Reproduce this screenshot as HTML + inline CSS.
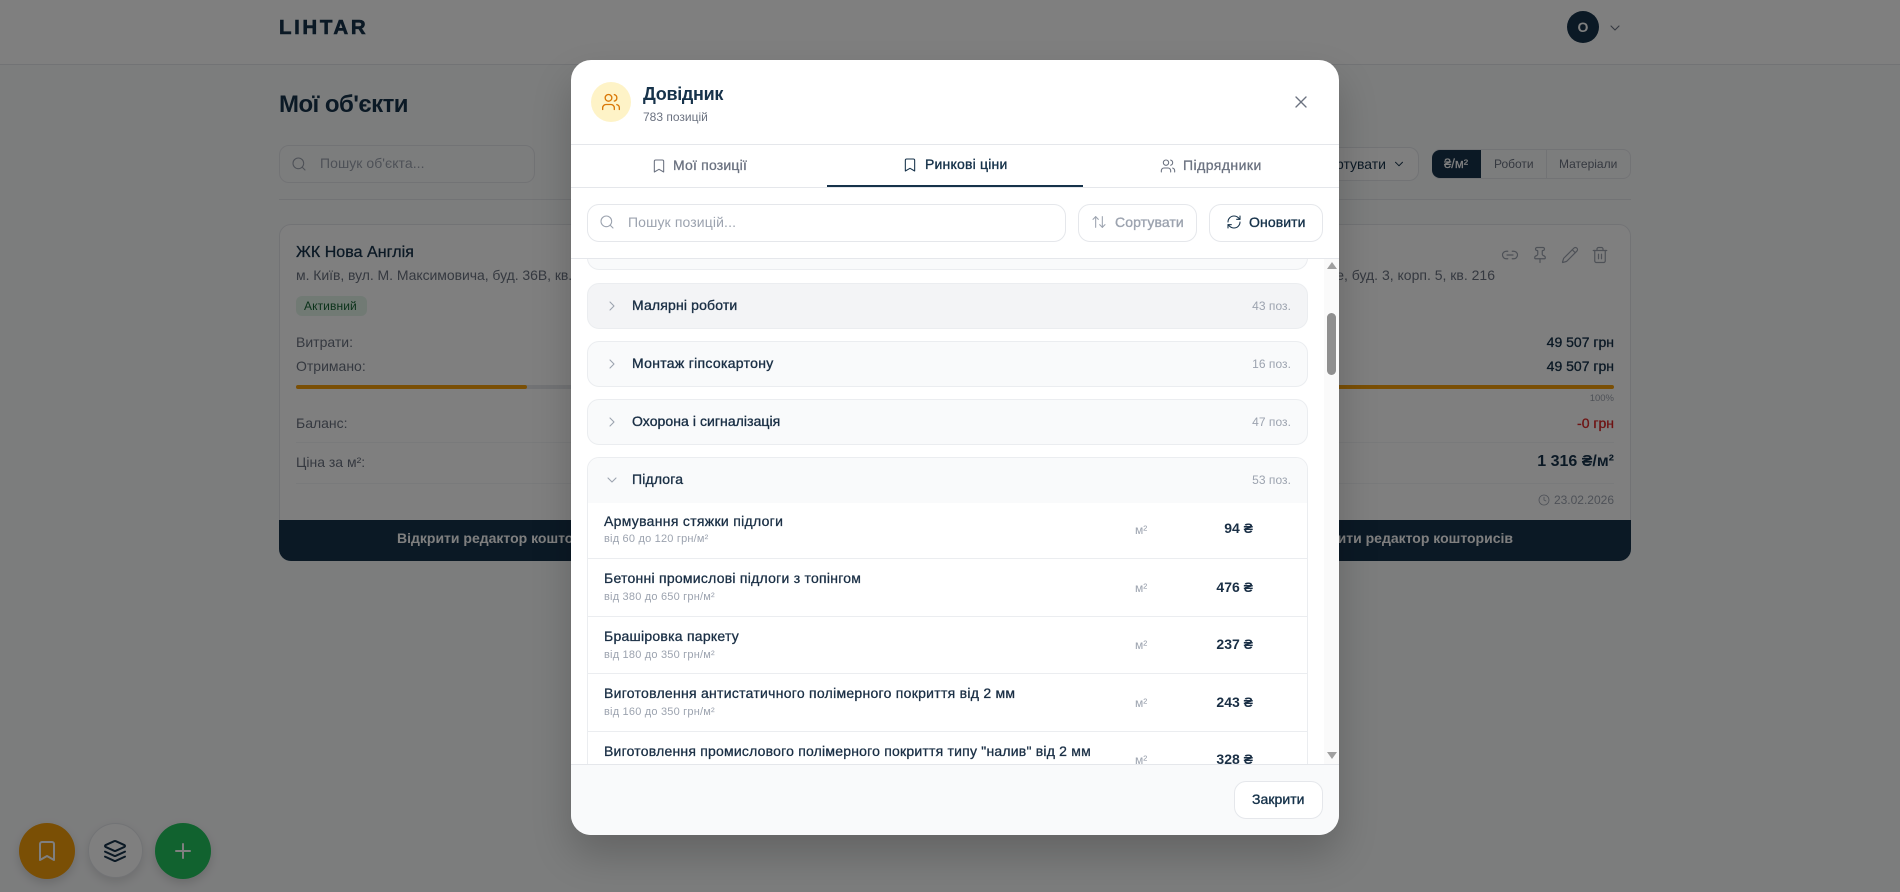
<!DOCTYPE html>
<html lang="uk"><head><meta charset="utf-8"><title>Довідник</title>
<style>
*{box-sizing:border-box}
html,body{margin:0;padding:0}
body{width:1900px;height:892px;overflow:hidden;position:relative;background:#f9fafb;font-family:"Liberation Sans","Noto Sans CJK JP",sans-serif;color:#16324a}
.a{position:absolute}
.t{position:absolute;white-space:nowrap;line-height:20px;font-size:14px}
svg{position:absolute;fill:none;stroke:currentColor;stroke-width:1.6;stroke-linecap:round;stroke-linejoin:round}
.cat{position:absolute;left:587px;width:721px;height:46px;border:1px solid #ebedf0;border-radius:12px;background:#f9fafb}
.name{position:absolute;left:632px;white-space:nowrap;line-height:20px;font-size:14px;color:#1a2f45;-webkit-text-stroke:.35px currentColor;letter-spacing:.16px}
.cnt{position:absolute;right:609px;white-space:nowrap;line-height:20px;font-size:12px;color:#9ca3af;letter-spacing:.05px}
.ti{position:absolute;left:604px;white-space:nowrap;line-height:20px;font-size:14px;color:#1a2f45;-webkit-text-stroke:.3px currentColor;letter-spacing:.25px}
.su{position:absolute;left:604px;white-space:nowrap;line-height:16px;font-size:11px;color:#9ca3af;letter-spacing:.2px}
.un{position:absolute;left:1135px;white-space:nowrap;line-height:20px;font-size:12px;color:#9ca3af}
.pr{position:absolute;right:647px;white-space:nowrap;line-height:20px;font-size:14px;font-weight:700;color:#1a2f45}
.ln{position:absolute;left:588px;width:719px;height:1px;background:#ebedf0}
</style></head><body>

<!-- page -->
<div class="a" style="left:0;top:0;width:1900px;height:65px;background:#fff;border-bottom:1px solid #e5e7eb"></div>
<div class="t" style="left:279px;top:18px;font-size:20.5px;font-weight:700;letter-spacing:2.6px;line-height:20px;color:#16324a;-webkit-text-stroke:.6px currentColor">LIHTAR</div>
<div class="a" style="left:1567px;top:11px;width:32px;height:32px;border-radius:50%;background:#16324a;color:#fff;font-size:14px;font-weight:700;text-align:center;line-height:32px">О</div>
<svg style="left:1607px;top:20px;color:#6b7280" width="16" height="16" viewBox="0 0 24 24"><path d="m6 9 6 6 6-6"/></svg>

<div class="t" style="left:279px;top:90px;line-height:30px;font-size:24px;font-weight:700;letter-spacing:-.55px;color:#16324a">Мої об'єкти</div>

<div class="a" style="left:279px;top:145px;width:256px;height:38px;border:1px solid #e5e7eb;border-radius:10px;background:#f9fafb"></div>
<svg style="left:291px;top:156px;color:#9ca3af" width="16" height="16" viewBox="0 0 24 24"><circle cx="11" cy="11" r="8"/><path d="m21 21-4.3-4.3"/></svg>
<div class="t" style="left:320px;top:153px;color:#9ca3af;letter-spacing:.05px">Пошук об'єкта...</div>

<div class="a" style="left:1300px;top:147px;width:119px;height:34px;border:1px solid #e5e7eb;border-radius:10px;background:#fff"></div>
<div class="t" style="right:514px;top:154px;color:#16324a">Сортувати</div>
<svg style="left:1392px;top:157px;color:#16324a" width="14" height="14" viewBox="0 0 24 24"><path d="m6 9 6 6 6-6"/></svg>
<div class="a" style="left:1432px;top:149px;width:199px;height:30px;border:1px solid #e5e7eb;border-radius:8px;background:#f9fafb"></div>
<div class="a" style="left:1432px;top:150px;width:49px;height:28px;background:#16324a;border-radius:8px 0 0 8px"></div>
<div class="t" style="left:1444px;top:154px;font-size:13px;color:#fff;-webkit-text-stroke:.2px currentColor">₴/м²</div>
<div class="t" style="left:1494px;top:154px;font-size:12px;color:#6b7280">Роботи</div>
<div class="a" style="left:1546px;top:150px;width:1px;height:28px;background:#e5e7eb"></div>
<div class="t" style="left:1559px;top:154px;font-size:12px;color:#6b7280">Матеріали</div>
<div class="a" style="left:279px;top:199px;width:1352px;height:1px;background:#e5e7eb"></div>

<div class="a" style="left:279px;top:224px;width:1352px;height:337px;background:#fff;border:1px solid #e5e7eb;border-radius:12px"></div>
<div class="a" style="left:279px;top:520px;width:1352px;height:41px;background:#16324a;border-radius:0 0 12px 12px"></div>
<div class="t" style="left:296px;top:243px;font-size:16px;color:#16324a;letter-spacing:.05px;-webkit-text-stroke:.3px currentColor">ЖК Нова Англія</div>
<div class="t" style="left:296px;top:265px;font-size:14px;letter-spacing:-.05px;color:#6b7280">м. Київ, вул. М. Максимовича, буд. 36В, кв. 12</div>
<div class="a" style="left:296px;top:296px;width:71px;height:20px;background:#e3f5e9;border-radius:6px"></div>
<div class="t" style="left:304px;top:296px;font-size:12px;letter-spacing:.1px;color:#166534">Активний</div>
<div class="t" style="left:296px;top:332px;color:#6b7280">Витрати:</div>
<div class="t" style="left:296px;top:356px;color:#6b7280">Отримано:</div>
<div class="a" style="left:296px;top:385px;width:300px;height:4px;background:#e5e7eb;border-radius:2px"></div>
<div class="a" style="left:296px;top:385px;width:231px;height:4px;background:#f59e0b;border-radius:2px"></div>
<div class="t" style="left:296px;top:413px;color:#6b7280">Баланс:</div>
<div class="a" style="left:296px;top:442px;width:300px;height:1px;background:#f3f4f6"></div>
<div class="t" style="left:296px;top:452px;color:#6b7280">Ціна за м²:</div>
<div class="a" style="left:296px;top:483px;width:300px;height:1px;background:#f3f4f6"></div>
<div class="t" style="left:397px;top:528px;font-weight:700;color:#fff">Відкрити редактор кошторисів</div>

<svg style="left:1501px;top:246px;color:#9ca3af" width="18" height="18" viewBox="0 0 24 24"><path d="M9 17H7A5 5 0 0 1 7 7h2"/><path d="M15 7h2a5 5 0 1 1 0 10h-2"/><path d="M8 12h8"/></svg>
<svg style="left:1531px;top:246px;color:#9ca3af" width="18" height="18" viewBox="0 0 24 24"><path d="M12 17v5"/><path d="M9 10.76a2 2 0 0 1-1.11 1.79l-1.78.9A2 2 0 0 0 5 15.24V16a1 1 0 0 0 1 1h12a1 1 0 0 0 1-1v-.76a2 2 0 0 0-1.11-1.79l-1.78-.9A2 2 0 0 1 15 10.76V7a1 1 0 0 1 1-1 2 2 0 0 0 0-4H8a2 2 0 0 0 0 4 1 1 0 0 1 1 1z"/></svg>
<svg style="left:1561px;top:246px;color:#9ca3af" width="18" height="18" viewBox="0 0 24 24"><path d="M21.174 6.812a1 1 0 0 0-3.986-3.987L3.842 16.174a2 2 0 0 0-.5.83l-1.321 4.352a.5.5 0 0 0 .623.622l4.353-1.32a2 2 0 0 0 .83-.497z"/><path d="m15 5 4 4"/></svg>
<svg style="left:1591px;top:246px;color:#9ca3af" width="18" height="18" viewBox="0 0 24 24"><path d="M3 6h18"/><path d="M19 6v14c0 1-1 2-2 2H7c-1 0-2-1-2-2V6"/><path d="M8 6V4c0-1 1-2 2-2h4c1 0 2 1 2 2v2"/><path d="M10 11v6"/><path d="M14 11v6"/></svg>
<div class="t" style="right:405px;top:265px;color:#6b7280">м. Київ, вул. Набережне шосе, буд. 3, корп. 5, кв. 216</div>
<div class="t" style="right:286px;top:332px;color:#16324a;-webkit-text-stroke:.3px currentColor">49 507 грн</div>
<div class="t" style="right:286px;top:356px;color:#16324a;-webkit-text-stroke:.3px currentColor">49 507 грн</div>
<div class="a" style="left:1320px;top:385px;width:294px;height:4px;background:#f59e0b;border-radius:2px"></div>
<div class="t" style="right:286px;top:389px;font-size:9.5px;color:#9ca3af">100%</div>
<div class="t" style="right:286px;top:413px;color:#dc2626;-webkit-text-stroke:.3px currentColor">-0 грн</div>
<div class="a" style="left:1320px;top:442px;width:294px;height:1px;background:#f3f4f6"></div>
<div class="t" style="right:286px;top:452px;font-size:16px;font-weight:700;color:#16324a">1 316 ₴/м²</div>
<div class="a" style="left:1320px;top:483px;width:294px;height:1px;background:#f3f4f6"></div>
<svg style="left:1538px;top:494px;color:#9ca3af" width="12" height="12" viewBox="0 0 24 24"><circle cx="12" cy="12" r="10"/><path d="M12 6v6l4 2"/></svg>
<div class="t" style="right:286px;top:490px;font-size:12px;color:#9ca3af">23.02.2026</div>
<div class="t" style="right:387px;top:528px;font-weight:700;color:#fff">Відкрити редактор кошторисів</div>

<!-- FABs -->
<div class="a" style="left:19px;top:823px;width:56px;height:56px;border-radius:50%;background:#f59e0b;box-shadow:0 4px 10px rgba(0,0,0,.15)"></div>
<svg style="left:35px;top:839px;color:#fff;stroke-width:2" width="24" height="24" viewBox="0 0 24 24"><path d="m19 21-7-4-7 4V5a2 2 0 0 1 2-2h10a2 2 0 0 1 2 2v16z"/></svg>
<div class="a" style="left:88px;top:823px;width:55px;height:55px;border-radius:50%;background:#fff;border:1px solid #e5e7eb;box-shadow:0 4px 10px rgba(0,0,0,.12)"></div>
<svg style="left:103px;top:839px;color:#16324a;stroke-width:2" width="24" height="24" viewBox="0 0 24 24"><path d="m12.83 2.18a2 2 0 0 0-1.66 0L2.6 6.08a1 1 0 0 0 0 1.83l8.58 3.91a2 2 0 0 0 1.66 0l8.58-3.9a1 1 0 0 0 0-1.83Z"/><path d="m22 17.65-9.17 4.16a2 2 0 0 1-1.66 0L2 17.65"/><path d="m22 12.65-9.17 4.16a2 2 0 0 1-1.66 0L2 12.65"/></svg>
<div class="a" style="left:155px;top:823px;width:56px;height:56px;border-radius:50%;background:#22c55e;box-shadow:0 4px 10px rgba(0,0,0,.15)"></div>
<svg style="left:171px;top:839px;color:#fff;stroke-width:2" width="24" height="24" viewBox="0 0 24 24"><path d="M5 12h14"/><path d="M12 5v14"/></svg>

<!-- overlay -->
<div class="a" style="left:0;top:0;width:1900px;height:892px;background:rgba(0,0,0,.5)"></div>

<!-- modal -->
<div class="a" style="left:571px;top:60px;width:768px;height:775px;background:#fff;border-radius:20px;box-shadow:0 20px 40px rgba(0,0,0,.2)"></div>
<div class="a" style="left:591px;top:82px;width:40px;height:40px;border-radius:50%;background:#fef3c7"></div>
<svg style="left:601px;top:92px;color:#d97706" width="20" height="20" viewBox="0 0 24 24"><path d="M16 21v-2a4 4 0 0 0-4-4H6a4 4 0 0 0-4 4v2"/><circle cx="9" cy="7" r="4"/><path d="M22 21v-2a4 4 0 0 0-3-3.87"/><path d="M16 3.13a4 4 0 0 1 0 7.75"/></svg>
<div class="t" style="left:643px;top:84px;font-size:18px;font-weight:700;letter-spacing:-.3px;color:#16324a">Довідник</div>
<div class="t" style="left:643px;top:107px;font-size:12px;color:#6b7280">783 позицій</div>
<svg style="left:1291px;top:92px;color:#6b7280" width="20" height="20" viewBox="0 0 24 24"><path d="M18 6 6 18"/><path d="m6 6 12 12"/></svg>
<div class="a" style="left:571px;top:144px;width:768px;height:1px;background:#e5e7eb"></div>
<div class="a" style="left:571px;top:187px;width:768px;height:1px;background:#e5e7eb"></div>
<div class="a" style="left:827px;top:185px;width:256px;height:2px;background:#16324a"></div>

<svg style="left:651px;top:158px;color:#6b7280" width="16" height="16" viewBox="0 0 24 24"><path d="m19 21-7-4-7 4V5a2 2 0 0 1 2-2h10a2 2 0 0 1 2 2v16z"/></svg>
<div class="t" style="left:673px;top:155px;color:#6b7280;letter-spacing:.2px;-webkit-text-stroke:.3px currentColor">Мої позиції</div>
<svg style="left:902px;top:157px;color:#16324a" width="16" height="16" viewBox="0 0 24 24"><path d="m19 21-7-4-7 4V5a2 2 0 0 1 2-2h10a2 2 0 0 1 2 2v16z"/></svg>
<div class="t" style="left:925px;top:154px;color:#16324a;letter-spacing:.2px;-webkit-text-stroke:.35px currentColor">Ринкові ціни</div>
<svg style="left:1160px;top:158px;color:#6b7280" width="16" height="16" viewBox="0 0 24 24"><path d="M16 21v-2a4 4 0 0 0-4-4H6a4 4 0 0 0-4 4v2"/><circle cx="9" cy="7" r="4"/><path d="M22 21v-2a4 4 0 0 0-3-3.87"/><path d="M16 3.13a4 4 0 0 1 0 7.75"/></svg>
<div class="t" style="left:1183px;top:155px;color:#6b7280;letter-spacing:.45px;-webkit-text-stroke:.3px currentColor">Підрядники</div>

<div class="a" style="left:587px;top:204px;width:479px;height:38px;border:1px solid #e5e7eb;border-radius:12px"></div>
<svg style="left:599px;top:214px;color:#9ca3af" width="16" height="16" viewBox="0 0 24 24"><circle cx="11" cy="11" r="8"/><path d="m21 21-4.3-4.3"/></svg>
<div class="t" style="left:628px;top:212px;color:#9ca3af;letter-spacing:.12px">Пошук позицій...</div>
<div class="a" style="left:1078px;top:204px;width:119px;height:38px;border:1px solid #e5e7eb;border-radius:12px"></div>
<svg style="left:1091px;top:214px;color:#9ca3af" width="16" height="16" viewBox="0 0 24 24"><path d="m21 16-4 4-4-4"/><path d="M17 20V4"/><path d="m3 8 4-4 4 4"/><path d="M7 4v16"/></svg>
<div class="t" style="left:1115px;top:212px;color:#9ca3af;letter-spacing:.1px;-webkit-text-stroke:.35px currentColor">Сортувати</div>
<div class="a" style="left:1209px;top:204px;width:114px;height:38px;border:1px solid #e5e7eb;border-radius:12px"></div>
<svg style="left:1226px;top:214px;color:#16324a" width="16" height="16" viewBox="0 0 24 24"><path d="M3 12a9 9 0 0 1 9-9 9.75 9.75 0 0 1 6.74 2.74L21 8"/><path d="M21 3v5h-5"/><path d="M21 12a9 9 0 0 1-9 9 9.75 9.75 0 0 1-6.74-2.74L3 16"/><path d="M8 16H3v5"/></svg>
<div class="t" style="left:1249px;top:212px;color:#16324a;letter-spacing:.1px;-webkit-text-stroke:.35px currentColor">Оновити</div>
<div class="a" style="left:571px;top:258px;width:768px;height:1px;background:#e5e7eb"></div>

<!-- list -->
<div class="a" style="left:0;top:259px;width:1900px;height:505px;overflow:hidden;clip-path:inset(0 561px 0 571px)">
 <div class="a" style="left:0;top:-259px;width:1900px;height:892px">
  <div class="cat" style="top:224px"></div>

  <div class="cat" style="top:283px;background:#f3f4f6"></div>
  <svg style="left:604px;top:298px;color:#9ca3af" width="16" height="16" viewBox="0 0 24 24"><path d="m9 18 6-6-6-6"/></svg>
  <div class="name" style="top:295px">Малярні роботи</div>
  <div class="cnt" style="top:296px">43 поз.</div>

  <div class="cat" style="top:341px"></div>
  <svg style="left:604px;top:356px;color:#9ca3af" width="16" height="16" viewBox="0 0 24 24"><path d="m9 18 6-6-6-6"/></svg>
  <div class="name" style="top:353px;letter-spacing:.3px">Монтаж гіпсокартону</div>
  <div class="cnt" style="top:354px">16 поз.</div>

  <div class="cat" style="top:399px"></div>
  <svg style="left:604px;top:414px;color:#9ca3af" width="16" height="16" viewBox="0 0 24 24"><path d="m9 18 6-6-6-6"/></svg>
  <div class="name" style="top:411px;letter-spacing:.06px">Охорона і сигналізація</div>
  <div class="cnt" style="top:412px">47 поз.</div>

  <div class="a" style="left:587px;top:457px;width:721px;height:340px;border:1px solid #ebedf0;border-radius:12px;background:#fff;overflow:hidden"><div style="height:45px;background:#f9fafb"></div></div>
  <svg style="left:604px;top:472px;color:#9ca3af" width="16" height="16" viewBox="0 0 24 24"><path d="m6 9 6 6 6-6"/></svg>
  <div class="name" style="top:469px">Підлога</div>
  <div class="cnt" style="top:470px">53 поз.</div>

  <div class="ti" style="top:511px;letter-spacing:.3px">Армування стяжки підлоги</div>
  <div class="su" style="top:531px">від 60 до 120 грн/м²</div>
  <div class="un" style="top:520px">м²</div>
  <div class="pr" style="top:518px">94 ₴</div>
  <div class="ln" style="top:558px"></div>

  <div class="ti" style="top:568px">Бетонні промислові підлоги з топінгом</div>
  <div class="su" style="top:589px">від 380 до 650 грн/м²</div>
  <div class="un" style="top:578px">м²</div>
  <div class="pr" style="top:577px">476 ₴</div>
  <div class="ln" style="top:616px"></div>

  <div class="ti" style="top:626px">Брашіровка паркету</div>
  <div class="su" style="top:647px">від 180 до 350 грн/м²</div>
  <div class="un" style="top:635px">м²</div>
  <div class="pr" style="top:634px">237 ₴</div>
  <div class="ln" style="top:673px"></div>

  <div class="ti" style="top:683px;letter-spacing:.27px">Виготовлення антистатичного полімерного покриття від 2 мм</div>
  <div class="su" style="top:704px">від 160 до 350 грн/м²</div>
  <div class="un" style="top:693px">м²</div>
  <div class="pr" style="top:692px">243 ₴</div>
  <div class="ln" style="top:731px"></div>

  <div class="ti" style="top:741px;letter-spacing:.21px">Виготовлення промислового полімерного покриття типу "налив" від 2 мм</div>
  <div class="su" style="top:762px">від 180 до 400 грн/м²</div>
  <div class="un" style="top:750px">м²</div>
  <div class="pr" style="top:749px">328 ₴</div>
 </div>
</div>

<!-- scrollbar -->
<div class="a" style="left:1324px;top:259px;width:15px;height:505px;background:#fafafa"></div>
<div class="a" style="left:1327px;top:313px;width:9px;height:62px;border-radius:5px;background:#8f8f8f"></div>
<div class="a" style="left:1327px;top:262px;width:0;height:0;border-left:5px solid transparent;border-right:5px solid transparent;border-bottom:7px solid #a0a0a0"></div>
<div class="a" style="left:1327px;top:752px;width:0;height:0;border-left:5px solid transparent;border-right:5px solid transparent;border-top:7px solid #a0a0a0"></div>

<!-- footer -->
<div class="a" style="left:571px;top:764px;width:768px;height:71px;background:#f9fafb;border-top:1px solid #e5e7eb;border-radius:0 0 20px 20px"></div>
<div class="a" style="left:1234px;top:781px;width:89px;height:38px;background:#fff;border:1px solid #e5e7eb;border-radius:12px"></div>
<div class="t" style="left:1252px;top:789px;color:#16324a;letter-spacing:.05px;-webkit-text-stroke:.35px currentColor">Закрити</div>
</body></html>
